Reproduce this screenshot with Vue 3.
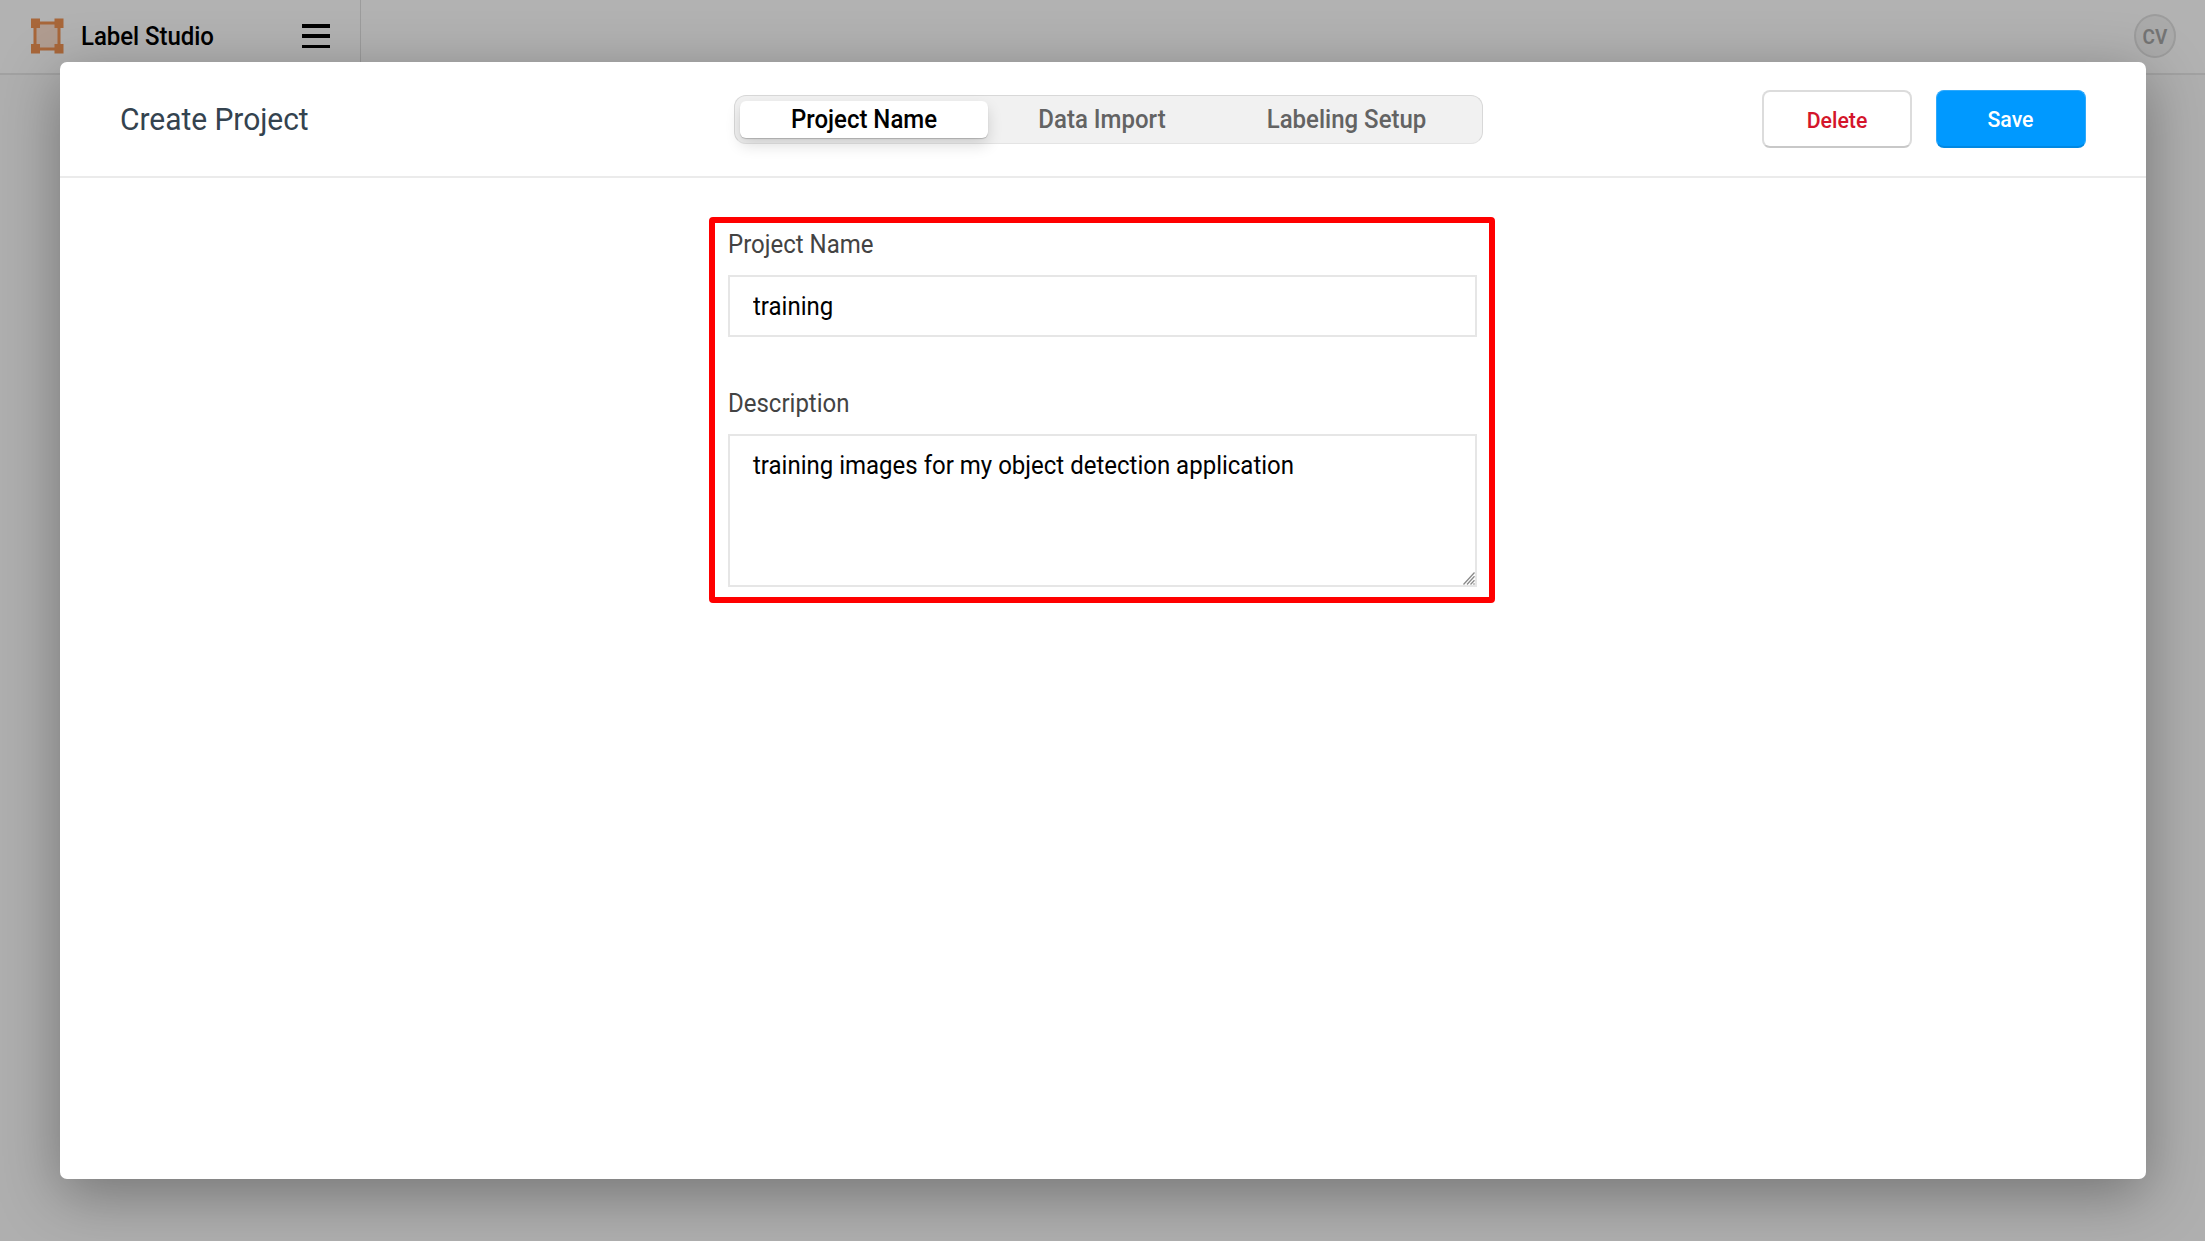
<script setup>
import { ref } from 'vue'

const tabs = ['Project Name', 'Data Import', 'Labeling Setup']
const activeTab = ref(0)
const name = ref('training')
const description = ref('training images for my object detection application')
</script>

<template>
  <div class="page">
    <header class="menubar">
      <div class="brand">
        <svg class="logo" width="34" height="36" viewBox="0 0 34 36">
          <rect x="6" y="6" width="22" height="24" fill="#b09c90" />
          <path d="M5 5H29V31H5Z" fill="none" stroke="#a8673a" stroke-width="3" />
          <path d="M1 0.5h9v9.500H1ZM24.500 0.500h9V10h-9ZM1 26h9v9.500H1ZM24.500 26h9v9.500h-9Z" fill="#a8673a" />
        </svg>
        <span class="brand-name tall">Label Studio</span>
        <div class="burger"><i /><i /><i /></div>
      </div>
      <div class="avatar"><span class="tall">CV</span></div>
    </header>

    <div class="modal">
      <div class="modal-header">
        <h1><span class="tall">Create Project</span></h1>
        <nav class="tabs">
          <button
            v-for="(tab, i) in tabs"
            :key="tab"
            :class="['tab', { active: i === activeTab }]"
            @click="activeTab = i"
          ><span class="tall">{{ tab }}</span></button>
        </nav>
        <div class="actions">
          <button class="btn delete"><span class="tall">Delete</span></button>
          <button class="btn save"><span class="tall">Save</span></button>
        </div>
      </div>
      <form class="form" @submit.prevent>
        <label for="name" class="tall">Project Name</label>
        <div class="field">
          <input id="name" v-model="name" class="tall" type="text" />
        </div>
        <label class="second tall" for="description">Description</label>
        <div class="field area">
          <textarea id="description" v-model="description" class="tall" spellcheck="false" />
          <svg class="grip" width="12" height="13" viewBox="0 0 12 13">
            <path d="M0.500 12.500L11.500 0.500M4 12.500L11.500 4.300M7.500 12.500L11.500 8.300M10.500 12.500L11.500 11.500" stroke="#8a8a8a" stroke-width="1.300" />
          </svg>
        </div>
      </form>
    </div>
  </div>
</template>

<style>
body {
  margin: 0;
  overflow: hidden;
}
</style>

<style scoped>
* {
  box-sizing: border-box;
}
.page {
  width: 2205px;
  height: 1241px;
  background: #afafaf;
  font-family: Roboto, sans-serif;
  overflow: hidden;
}
button,
input,
textarea {
  font-family: inherit;
  margin: 0;
}
.tall {
  display: inline-block;
  transform: translateY(0.6px) scaleY(1.06);
}
.menubar {
  height: 75px;
  border-bottom: 2px solid #a2a2a2;
  background: #b2b2b2;
  display: flex;
  justify-content: space-between;
}
.brand {
  width: 361px;
  border-right: 1px solid #9c9c9c;
  display: flex;
  align-items: center;
  padding: 0 30px 2px 30px;
}
.brand-name {
  font-size: 24px;
  font-weight: 500;
  margin-left: 17px;
  color: #000;
  white-space: nowrap;
  letter-spacing: -0.05px;
}
.burger {
  width: 28px;
  height: 24px;
  margin-left: auto;
  margin-top: 1px;
  display: flex;
  flex-direction: column;
  justify-content: space-between;
}
.burger i {
  height: 3.5px;
  background: #000;
}
.avatar {
  width: 42px;
  height: 44px;
  margin: 14px 29px 0 0;
  border: 2px solid #9c9c9c;
  border-radius: 50%;
  background: #aaa;
  color: #747474;
  font-size: 19px;
  font-weight: 600;
  display: flex;
  align-items: center;
  justify-content: center;
}
.modal {
  position: relative;
  width: 2086px;
  height: 1117px;
  margin: -13px 0 0 60px;
  background: #fff;
  border-radius: 7px;
  box-shadow: 0 15px 60px rgba(0, 0, 0, 0.34);
}
.modal-header {
  height: 116px;
  border-bottom: 2px solid #ebebeb;
  display: flex;
  align-items: center;
  padding: 0 60px;
}
h1 {
  margin: 0;
  width: 614px;
  font-size: 30px;
  line-height: 36px;
  font-weight: 400;
  letter-spacing: -0.05px;
  color: #34434f;
}
.tabs {
  width: 749px;
  height: 49px;
  border: 1px solid #d8d8d8;
  border-bottom-color: #e4e4e4;
  border-radius: 12px;
  background: #f1f1f1;
  padding: 5px;
  display: flex;
}
.tab {
  flex: 1;
  height: 37px;
  border: 0;
  padding: 0;
  background: none;
  border-radius: 6px;
  font-size: 24px;
  font-weight: 500;
  color: #636363;
}
.tab:nth-child(1) {
  flex: 0 0 248px;
}
.tab:nth-child(2) {
  flex: 0 0 228px;
}
.tab.active {
  background: #fff;
  color: #000;
  box-shadow: 0 1px 1px rgba(0, 0, 0, 0.2), 0 7px 15px rgba(0, 0, 0, 0.14);
}
.actions {
  margin-left: auto;
  margin-right: 0.5px;
  display: flex;
  gap: 23.500px;
}
.btn {
  width: 150px;
  height: 58px;
  border-radius: 8px;
  font-size: 21.3px;
  font-weight: 500;
  padding: 0;
}
.delete {
  background: #fff;
  border: 2px solid #dcdcdc;
  border-bottom-color: #c8c8c8;
  color: #d4152b;
}
.save {
  background: #0099ff;
  border: 1px solid #2fa9fb;
  border-bottom: 2px solid #0088e2;
  color: #fff;
}
.form {
  width: 786px;
  height: 386px;
  margin: 39px 0 0 649px;
  border: 6px solid #f00;
  border-radius: 4px;
  padding: 7px 12px 0 13px;
  display: flex;
  flex-direction: column;
}
label {
  height: 28px;
  line-height: 28px;
  font-size: 24px;
  color: #434343;
}
.second {
  margin-top: 52px;
}
.field {
  position: relative;
  flex: none;
  width: 749px;
  height: 62px;
  margin-top: 17px;
  border: 2px solid #e6e6e6;
}
.area {
  height: 153px;
}
input,
textarea {
  display: block;
  width: 100%;
  border: 0;
  border-radius: 0;
  background: transparent;
  outline: none;
  font-size: 24px;
  color: #000;
}
input {
  height: 58px;
  padding: 0 23px;
}
textarea {
  height: 140px;
  padding: 15px 23px;
  line-height: 29px;
  resize: none;
  overflow: hidden;
  transform-origin: 0 29px;
}
.grip {
  position: absolute;
  right: 0;
  bottom: 0;
}
</style>
